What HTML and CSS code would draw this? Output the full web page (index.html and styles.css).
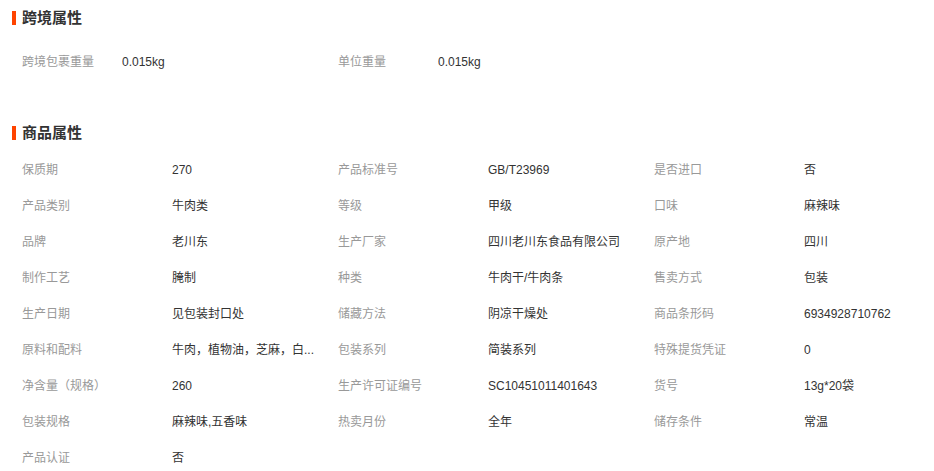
FILE: index.html
```html
<!DOCTYPE html>
<html lang="zh-CN">
<head>
  <meta charset="UTF-8" />
  <meta name="viewport" content="width=device-width, initial-scale=1.0"/>
  <title>商品属性</title>
  <link rel="stylesheet" href="styles.css">
</head>
<body>

  <!-- 跨境属性 -->
  <div class="attr-section">
    <h3 class="attr-title">跨境属性</h3>
    <div class="attr-list attr-list-small">
      <div class="attr-item"><span class="attr-label">跨境包裹重量</span><span class="attr-value">0.015kg</span></div>
      <div class="attr-item"><span class="attr-label">单位重量</span><span class="attr-value">0.015kg</span></div>
    </div>
  </div>

  <!-- 商品属性 -->
  <div class="attr-section attr-section-main">
    <h3 class="attr-title">商品属性</h3>
    <div class="attr-list">
      <div class="attr-item"><span class="attr-label">保质期</span><span class="attr-value">270</span></div>
      <div class="attr-item"><span class="attr-label">产品标准号</span><span class="attr-value">GB/T23969</span></div>
      <div class="attr-item"><span class="attr-label">是否进口</span><span class="attr-value">否</span></div>

      <div class="attr-item"><span class="attr-label">产品类别</span><span class="attr-value">牛肉类</span></div>
      <div class="attr-item"><span class="attr-label">等级</span><span class="attr-value">甲级</span></div>
      <div class="attr-item"><span class="attr-label">口味</span><span class="attr-value">麻辣味</span></div>

      <div class="attr-item"><span class="attr-label">品牌</span><span class="attr-value">老川东</span></div>
      <div class="attr-item"><span class="attr-label">生产厂家</span><span class="attr-value">四川老川东食品有限公司</span></div>
      <div class="attr-item"><span class="attr-label">原产地</span><span class="attr-value">四川</span></div>

      <div class="attr-item"><span class="attr-label">制作工艺</span><span class="attr-value">腌制</span></div>
      <div class="attr-item"><span class="attr-label">种类</span><span class="attr-value">牛肉干/牛肉条</span></div>
      <div class="attr-item"><span class="attr-label">售卖方式</span><span class="attr-value">包装</span></div>

      <div class="attr-item"><span class="attr-label">生产日期</span><span class="attr-value">见包装封口处</span></div>
      <div class="attr-item"><span class="attr-label">储藏方法</span><span class="attr-value">阴凉干燥处</span></div>
      <div class="attr-item"><span class="attr-label">商品条形码</span><span class="attr-value">6934928710762</span></div>

      <div class="attr-item"><span class="attr-label">原料和配料</span><span class="attr-value" title="牛肉，植物油，芝麻，白砂糖，食用盐，辣椒，花椒">牛肉，植物油，芝麻，白...</span></div>
      <div class="attr-item"><span class="attr-label">包装系列</span><span class="attr-value">简装系列</span></div>
      <div class="attr-item"><span class="attr-label">特殊提货凭证</span><span class="attr-value">0</span></div>

      <div class="attr-item"><span class="attr-label">净含量（规格）</span><span class="attr-value">260</span></div>
      <div class="attr-item"><span class="attr-label">生产许可证编号</span><span class="attr-value">SC10451011401643</span></div>
      <div class="attr-item"><span class="attr-label">货号</span><span class="attr-value">13g*20袋</span></div>

      <div class="attr-item"><span class="attr-label">包装规格</span><span class="attr-value">麻辣味,五香味</span></div>
      <div class="attr-item"><span class="attr-label">热卖月份</span><span class="attr-value">全年</span></div>
      <div class="attr-item"><span class="attr-label">储存条件</span><span class="attr-value">常温</span></div>

      <div class="attr-item"><span class="attr-label">产品认证</span><span class="attr-value">否</span></div>
    </div>
  </div>

</body>
</html>
```

FILE: styles.css
```css
* {
  box-sizing: border-box;
}

body {
  margin: 0;
  padding: 0;
  font-family: 'Liberation Sans', 'Noto Sans CJK SC', sans-serif;
  font-size: 12px;
  color: #333;
  background-color: #fff;
}

.attr-section {
  padding-top: 11px;
}

.attr-section-main {
  padding-top: 46px;
}

.attr-title {
  margin: 0 0 0 12px;
  padding-left: 6px;
  border-left: 4px solid #ff4400;
  font-size: 15px;
  line-height: 14px;
  height: 14px;
  font-weight: bold;
  color: #333;
}

.attr-list {
  display: grid;
  grid-template-columns: repeat(3, 316px);
  padding-left: 22px;
  margin-top: 12px;
}

.attr-list-small {
  margin-top: 19px;
}

.attr-item {
  display: flex;
  height: 36px;
  line-height: 36px;
}

.attr-label {
  width: 150px;
  flex-shrink: 0;
  color: #999;
}

.attr-list-small .attr-label {
  width: 100px;
}

.attr-value {
  width: 150px;
  color: #333;
  white-space: nowrap;
  overflow: hidden;
}
```
